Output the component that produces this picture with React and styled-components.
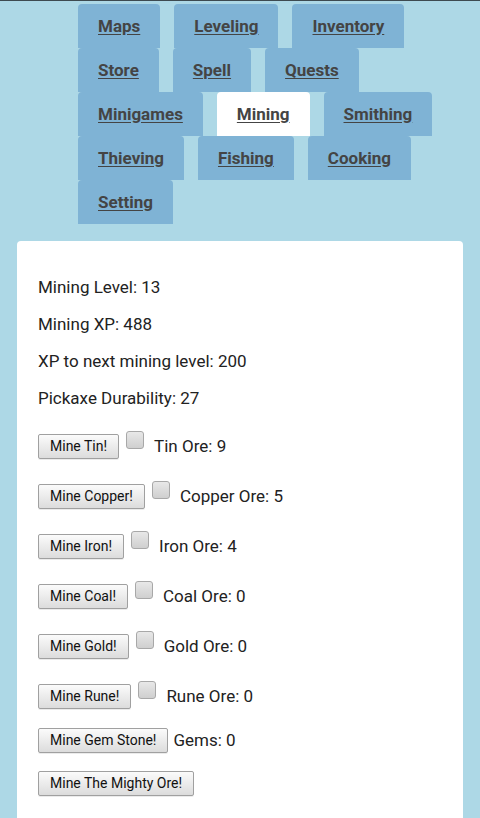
import styled, { createGlobalStyle } from 'styled-components'

const GlobalStyle = createGlobalStyle`
    html, body {
        margin: 0;
        padding: 0;
        background-color: #add8e6;
        font-family: Roboto, "Liberation Sans", sans-serif;
    }
    body {
        border-top: 1px solid #3d4a50;
    }
`

const Page = styled.div`
    padding: 3px 17px 0 17px;
`

const Nav = styled.nav`
    display: flex;
    flex-wrap: wrap;
    column-gap: 14px;
    width: 380px;
    margin-left: 61px;
`

const Tab = styled.a`
    display: flex;
    align-items: center;
    height: 44px;
    padding: 0 20px;
    border-radius: 4px 4px 0 0;
    background-color: ${p => (p.$active ? '#ffffff' : '#7fb3d5')};
    color: #444;
    font-size: 17px;
    font-weight: 700;
    text-decoration: underline;
    text-underline-offset: 2px;
    cursor: pointer;
`

const Card = styled.main`
    margin-top: 17px;
    background-color: #fff;
    border-radius: 4px 4px 0 0;
    padding: 20px 21px 40px;
    min-height: 540px;
`

const Stat = styled.p`
    margin: 16px 0;
    font-size: 17px;
    line-height: 21px;
    color: #222;
`

const Row = styled.div`
    display: flex;
    align-items: center;
    height: 24px;
    margin-top: ${p => p.$top}px;
`

const MineButton = styled.button`
    height: 25px;
    padding: 0 11px;
    font-family: Roboto, "Liberation Sans", sans-serif;
    font-size: 14px;
    color: #111;
    background: linear-gradient(#fbfbfb, #dcdcdc);
    border: 1px solid #a0a0a0;
    border-radius: 2px;
    box-shadow: 0 1px 0 rgba(0, 0, 0, 0.08);
`

const Check = styled.input.attrs({ type: 'checkbox' })`
    appearance: none;
    width: 18px;
    height: 18px;
    margin: 0 0 12px 7px;
    border: 1px solid #a8a8a8;
    border-radius: 3px;
    background: linear-gradient(#e8e8e8, #cfcfcf);
`

const Count = styled.span`
    margin-left: ${p => p.$gap}px;
    font-size: 17px;
    color: #222;
`

const tabs = [
    'Maps', 'Leveling', 'Inventory', 'Store', 'Spell', 'Quests',
    'Minigames', 'Mining', 'Smithing', 'Thieving', 'Fishing', 'Cooking', 'Setting',
]

const ores = [
    { name: 'Tin', count: 9 },
    { name: 'Copper', count: 5 },
    { name: 'Iron', count: 4 },
    { name: 'Coal', count: 0 },
    { name: 'Gold', count: 0 },
    { name: 'Rune', count: 0 },
]

function App() {
    return (
        <Page>
            <GlobalStyle />
            <Nav>
                {tabs.map(t => (
                    <Tab key={t} $active={t === 'Mining'}>{t}</Tab>
                ))}
            </Nav>

            <Card>
                <Stat>Mining Level: 13</Stat>
                <Stat>Mining XP: 488</Stat>
                <Stat>XP to next mining level: 200</Stat>
                <Stat>Pickaxe Durability: 27</Stat>

                {ores.map((o, i) => (
                    <Row key={o.name} $top={i === 0 ? 25 : 26}>
                        <MineButton>Mine {o.name}!</MineButton>
                        <Check />
                        <Count $gap={10}>{o.name} Ore: {o.count}</Count>
                    </Row>
                ))}

                <Row $top={20}>
                    <MineButton>Mine Gem Stone!</MineButton>
                    <Count $gap={5}>Gems: 0</Count>
                </Row>

                <Row $top={19}>
                    <MineButton>Mine The Mighty Ore!</MineButton>
                </Row>
            </Card>
        </Page>
    )
}

export default App
